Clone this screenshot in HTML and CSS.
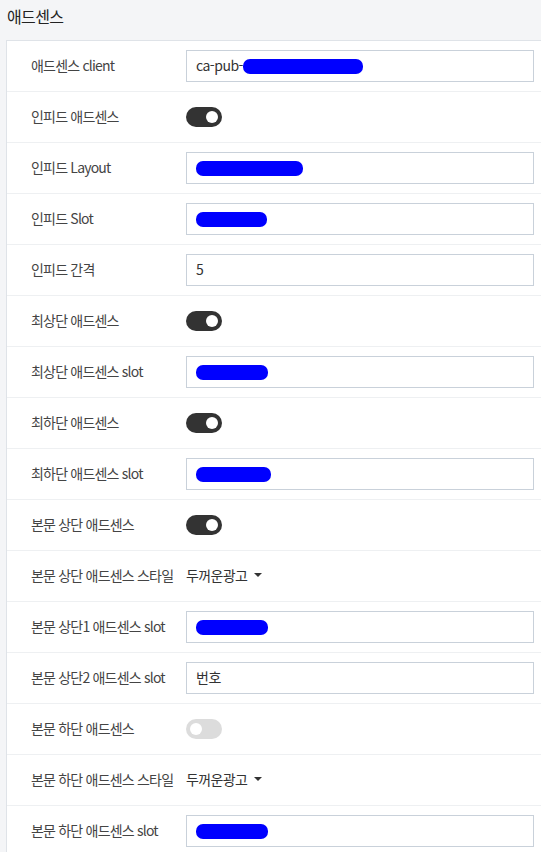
FILE: index.html
```html
<!DOCTYPE html>
<html lang="ko">
<head>
<meta charset="utf-8">
<link rel="stylesheet" href="styles.css">
</head>
<body>
<h2 class="title">애드센스</h2>
<div class="card">
  <div class="row"><div class="label">애드센스 client</div><div class="field"><div class="input">ca-pub-<span class="redact" style="width:120px"></span></div></div></div>
  <div class="row"><div class="label">인피드 애드센스</div><div class="field"><span class="toggle on"></span></div></div>
  <div class="row"><div class="label">인피드 Layout</div><div class="field"><div class="input"><span class="redact" style="width:107px"></span></div></div></div>
  <div class="row"><div class="label">인피드 Slot</div><div class="field"><div class="input"><span class="redact" style="width:71px"></span></div></div></div>
  <div class="row"><div class="label">인피드 간격</div><div class="field"><div class="input">5</div></div></div>
  <div class="row"><div class="label">최상단 애드센스</div><div class="field"><span class="toggle on"></span></div></div>
  <div class="row"><div class="label">최상단 애드센스 slot</div><div class="field"><div class="input"><span class="redact" style="width:72px"></span></div></div></div>
  <div class="row"><div class="label">최하단 애드센스</div><div class="field"><span class="toggle on"></span></div></div>
  <div class="row"><div class="label">최하단 애드센스 slot</div><div class="field"><div class="input"><span class="redact" style="width:75px"></span></div></div></div>
  <div class="row"><div class="label">본문 상단 애드센스</div><div class="field"><span class="toggle on"></span></div></div>
  <div class="row"><div class="label">본문 상단 애드센스 스타일</div><div class="field"><span class="select">두꺼운광고<span class="caret"></span></span></div></div>
  <div class="row"><div class="label">본문 상단1 애드센스 slot</div><div class="field"><div class="input"><span class="redact" style="width:72px"></span></div></div></div>
  <div class="row"><div class="label">본문 상단2 애드센스 slot</div><div class="field"><div class="input">번호</div></div></div>
  <div class="row"><div class="label">본문 하단 애드센스</div><div class="field"><span class="toggle off"></span></div></div>
  <div class="row"><div class="label">본문 하단 애드센스 스타일</div><div class="field"><span class="select">두꺼운광고<span class="caret"></span></span></div></div>
  <div class="row"><div class="label">본문 하단 애드센스 slot</div><div class="field"><div class="input"><span class="redact" style="width:72px"></span></div></div></div>
</div>
</body>
</html>
```

FILE: styles.css
```css
html, body {
  margin: 0;
  padding: 0;
  background: #f4f5f7;
  font-family: "Noto Sans CJK KR", "Noto Sans", sans-serif;
  color: #333;
  overflow: hidden;
}
.title {
  margin: 0;
  padding: 3px 0 0 7px;
  height: 40px;
  box-sizing: border-box;
  font-size: 16px;
  font-weight: 400;
  line-height: 26px;
  letter-spacing: -0.6px;
  color: #222;
}
.card {
  margin-left: 6px;
  width: 560px;
  background: #fff;
  border: 1px solid #dfe3e8;
  border-right: none;
}
.row {
  display: flex;
  align-items: center;
  height: 50px;
  border-bottom: 1px solid #eef0f2;
  padding-left: 24px;
}
.label {
  width: 155px;
  font-size: 14px;
  color: #444;
  letter-spacing: -0.8px;
  margin-bottom: 2px;
}
.field {
  display: flex;
  align-items: center;
}
.input {
  box-sizing: border-box;
  width: 348px;
  height: 32px;
  border: 1px solid #c9d1da;
  padding: 0 9px 2px;
  display: flex;
  align-items: center;
  font-size: 14px;
  letter-spacing: -0.5px;
  color: #333;
}
.redact {
  display: inline-block;
  height: 15px;
  margin-top: 2px;
  background: #0000ff;
  border-radius: 7px;
}
.toggle {
  position: relative;
  display: inline-block;
  width: 36px;
  height: 20px;
  border-radius: 10px;
  background: #333;
}
.toggle::after {
  content: "";
  position: absolute;
  top: 4px;
  width: 12px;
  height: 12px;
  border-radius: 50%;
  background: #fff;
}
.toggle.on::after { right: 4px; }
.toggle.off { background: #dcdcdc; }
.toggle.off::after { left: 4px; }
.select {
  display: inline-flex;
  align-items: center;
  font-size: 14px;
  letter-spacing: -0.6px;
  color: #333;
  margin-bottom: 2px;
}
.caret {
  display: inline-block;
  margin-left: 7px;
  width: 0;
  height: 0;
  border-left: 4px solid transparent;
  border-right: 4px solid transparent;
  border-top: 4px solid #333;
}
```
